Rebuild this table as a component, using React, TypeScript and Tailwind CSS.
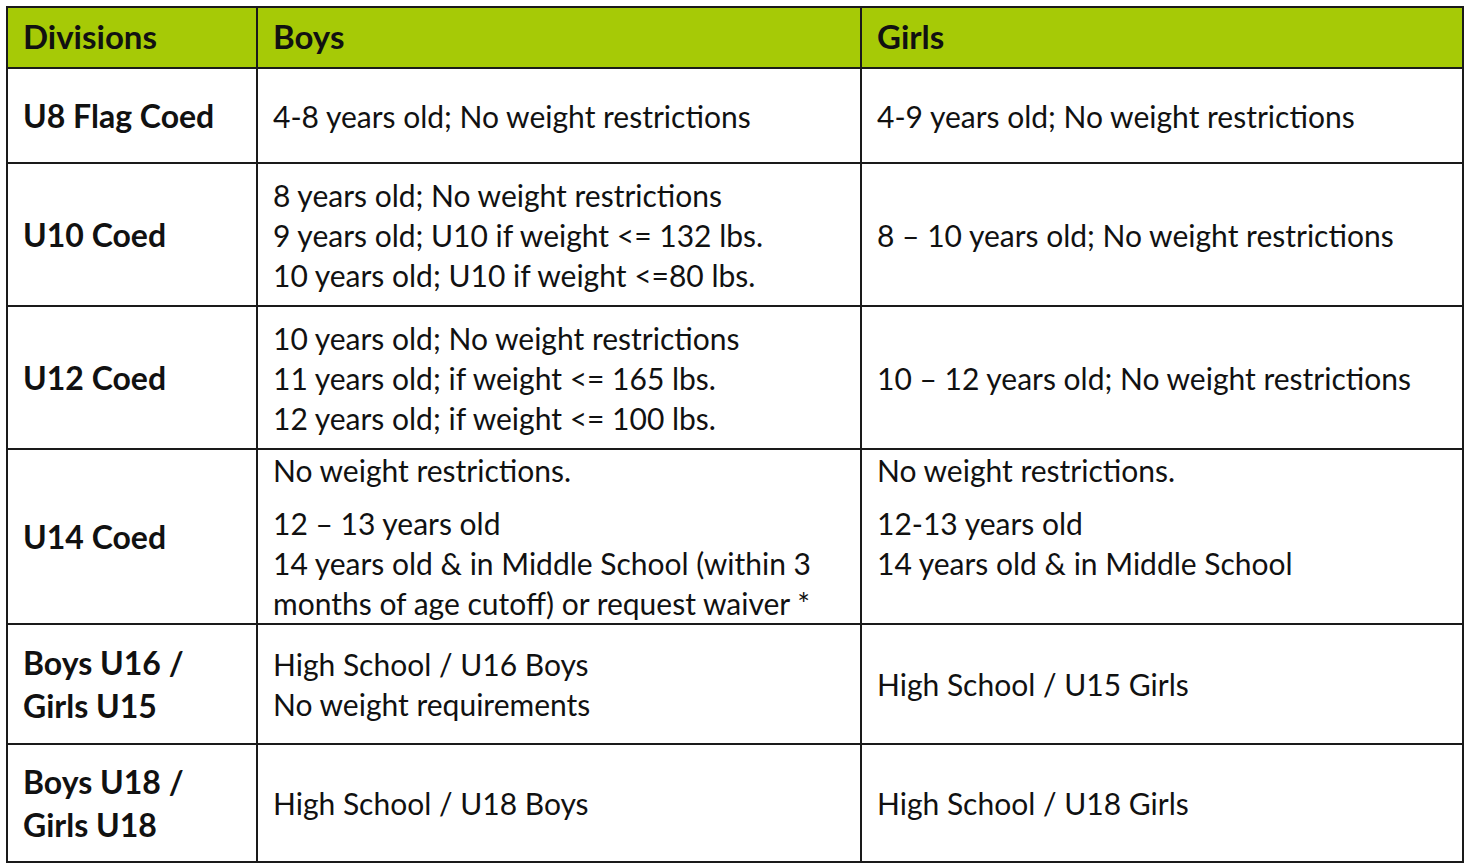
import React from 'react';

interface DivisionRow {
  division: string[];
  boys: string[][];
  girls: string[][];
  height: string;
  top?: boolean;
}

const rows: DivisionRow[] = [
  {
    division: ['U8 Flag Coed'],
    boys: [['4-8 years old; No weight restrictions']],
    girls: [['4-9 years old; No weight restrictions']],
    height: 'h-[95px]',
  },
  {
    division: ['U10 Coed'],
    boys: [[
      '8 years old; No weight restrictions',
      '9 years old; U10 if weight <= 132 lbs.',
      '10 years old; U10 if weight <=80 lbs.',
    ]],
    girls: [['8 \u2013 10 years old; No weight restrictions']],
    height: 'h-[143px]',
  },
  {
    division: ['U12 Coed'],
    boys: [[
      '10 years old; No weight restrictions',
      '11 years old; if weight <= 165 lbs.',
      '12 years old; if weight <= 100 lbs.',
    ]],
    girls: [['10 \u2013 12 years old; No weight restrictions']],
    height: 'h-[143px]',
  },
  {
    division: ['U14 Coed'],
    boys: [
      ['No weight restrictions.'],
      ['12 \u2013 13 years old', '14 years old & in Middle School (within 3', 'months of age cutoff) or request waiver *'],
    ],
    girls: [
      ['No weight restrictions.'],
      ['12-13 years old', '14 years old & in Middle School'],
    ],
    height: 'h-[174px]',
    top: true,
  },
  {
    division: ['Boys U16 /', 'Girls U15'],
    boys: [['High School / U16 Boys', 'No weight requirements']],
    girls: [['High School / U15 Girls']],
    height: 'h-[120px]',
  },
  {
    division: ['Boys U18 /', 'Girls U18'],
    boys: [['High School / U18 Boys']],
    girls: [['High School / U18 Girls']],
    height: 'h-[118px]',
  },
];

// stacked line groups, with a small gap between paragraphs
const Paragraphs = ({ groups }: { groups: string[][] }) => (
  <div className="flex flex-col gap-[13px]">
    {groups.map((lines, i) => (
      <div key={i}>
        {lines.map((line) => (
          <div key={line} className="whitespace-nowrap">{line}</div>
        ))}
      </div>
    ))}
  </div>
);

export default function App() {
  return (
    <div className="min-h-screen bg-white pl-[6px] pt-[6px] font-['Lato',sans-serif] text-[#111] text-[30px] leading-[40px]">
      <table className="table-fixed border-collapse border-2 border-[#1a1a1a]">
        <colgroup>
          <col className="w-[250px]" />
          <col className="w-[604px]" />
          <col className="w-[602px]" />
        </colgroup>
        <thead>
          <tr className="h-[61px] bg-[#a6ca06] text-[33px]">
            <th className="border-2 border-[#1a1a1a] px-[15px] pb-[3px] text-left align-middle font-bold">Divisions</th>
            <th className="border-2 border-[#1a1a1a] px-[15px] pb-[3px] text-left align-middle font-bold">Boys</th>
            <th className="border-2 border-[#1a1a1a] px-[15px] pb-[3px] text-left align-middle font-bold">Girls</th>
          </tr>
        </thead>
        <tbody>
          {rows.map((row) => (
            <tr key={row.division.join(' ')} className={row.height}>
              <td className="border-2 border-[#1a1a1a] px-[15px] align-middle font-bold text-[32px] leading-[43px]">
                {row.division.map((line) => (
                  <div key={line} className="whitespace-nowrap">{line}</div>
                ))}
              </td>
              <td className={`border-2 border-[#1a1a1a] px-[15px] ${row.top ? 'align-top' : 'align-middle'}`}>
                <Paragraphs groups={row.boys} />
              </td>
              <td className={`border-2 border-[#1a1a1a] px-[15px] ${row.top ? 'align-top' : 'align-middle'}`}>
                <Paragraphs groups={row.girls} />
              </td>
            </tr>
          ))}
        </tbody>
      </table>
    </div>
  );
}
